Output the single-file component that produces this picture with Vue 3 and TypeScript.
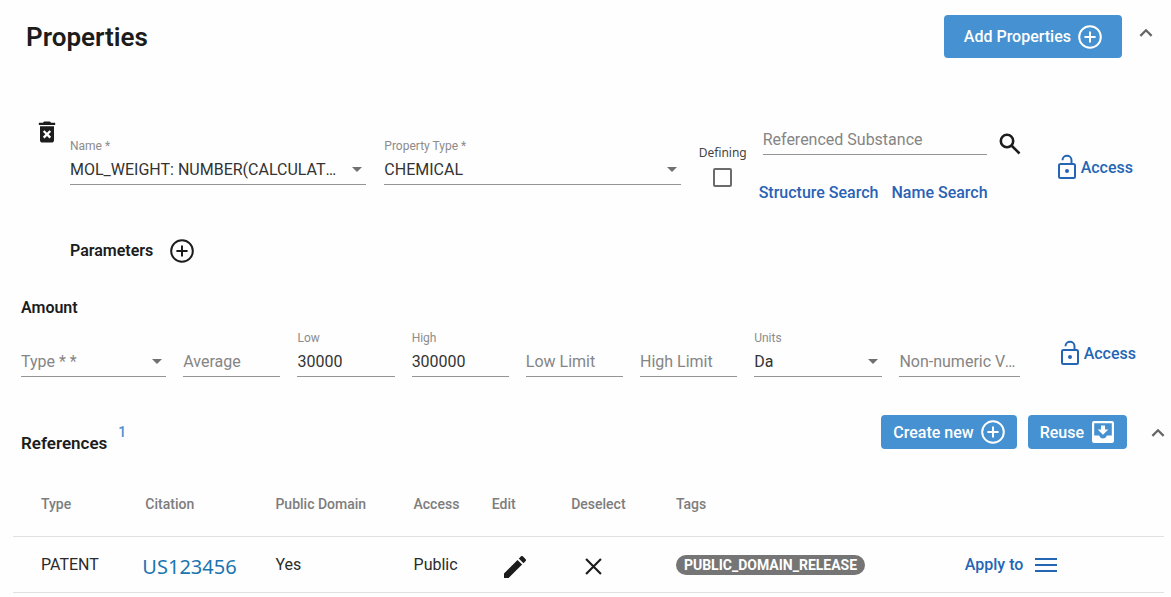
<script setup lang="ts">
import { ref } from 'vue'

interface AmountField {
  id: string
  label: string
  value: string
  floating: boolean
}

interface Reference {
  type: string
  citation: string
  publicDomain: string
  access: string
  tag: string
}

const propertyName = ref('MOL_WEIGHT: NUMBER(CALCULATED)')
const propertyType = ref('CHEMICAL')
const defining = ref(false)
const substance = ref('')
const amountType = ref('')
const units = ref('Da')
const nonNumeric = ref('')

const amountFields = ref<AmountField[]>([
  { id: 'average', label: 'Average', value: '', floating: false },
  { id: 'low', label: 'Low', value: '30000', floating: true },
  { id: 'high', label: 'High', value: '300000', floating: true },
  { id: 'low-limit', label: 'Low Limit', value: '', floating: false },
  { id: 'high-limit', label: 'High Limit', value: '', floating: false },
])

const columns: string[] = ['Type', 'Citation', 'Public Domain', 'Access', 'Edit', 'Deselect', 'Tags']

const references = ref<Reference[]>([
  { type: 'PATENT', citation: 'US123456', publicDomain: 'Yes', access: 'Public', tag: 'PUBLIC_DOMAIN_RELEASE' },
])
</script>

<template>
  <main class="page">
    <header class="page-head">
      <h1>Properties</h1>
      <button type="button" class="primary large">
        <span>Add Properties</span>
        <svg class="i-plus" viewBox="0 0 24 24"><circle cx="12" cy="12" r="10.8" /><path d="M12 6.4v11.2M6.4 12h11.2" /></svg>
      </button>
      <button type="button" class="bare chevron" aria-label="Collapse properties">
        <svg viewBox="0 0 12 8"><path d="M1 7l5-5 5 5" /></svg>
      </button>
    </header>

    <section class="property">
      <button type="button" class="bare trash" aria-label="Delete property">
        <svg viewBox="0 0 24 24"><path fill-rule="evenodd" d="M6 19c0 1.1.9 2 2 2h8c1.1 0 2-.9 2-2V7H6v12zm2.46-7.12l1.41-1.41L12 12.59l2.12-2.12 1.41 1.41L13.41 14l2.12 2.12-1.41 1.41L12 15.41l-2.12 2.12-1.41-1.41L10.59 14l-2.13-2.12zM15.5 4l-1-1h-5l-1 1H5v2h14V4z" /></svg>
      </button>

      <div class="field wide">
        <label for="name">Name *</label>
        <select id="name" v-model="propertyName">
          <option>MOL_WEIGHT: NUMBER(CALCULATED)</option>
        </select>
      </div>
      <div class="field wide">
        <label for="ptype">Property Type *</label>
        <select id="ptype" v-model="propertyType">
          <option>CHEMICAL</option>
        </select>
      </div>

      <div class="defining">
        <label for="defining">Defining</label>
        <input id="defining" v-model="defining" type="checkbox" />
      </div>

      <div class="substance">
        <div class="search">
          <div class="field">
            <input v-model="substance" type="text" placeholder="Referenced Substance" aria-label="Referenced Substance" />
          </div>
          <button type="button" class="bare" aria-label="Search">
            <svg viewBox="0 0 22 22"><circle cx="8" cy="8" r="6.2" /><path d="M12.5 12.5L20.5 20.5" /></svg>
          </button>
        </div>
        <nav class="links">
          <a href="#structure">Structure Search</a>
          <a href="#name-search">Name Search</a>
        </nav>
      </div>

      <button type="button" class="bare access">
        <svg viewBox="0 0 20 26"><rect x="2" y="10" width="16" height="14" rx="1.5" /><path d="M5.5 6.2C5.5 0.4 14.5 0.4 14.5 6.2V10" /><circle class="dot" cx="10" cy="17" r="2" /></svg>
        <span>Access</span>
      </button>
    </section>

    <div class="parameters">
      <h2>Parameters</h2>
      <button type="button" class="bare" aria-label="Add parameter">
        <svg class="i-plus" viewBox="0 0 24 24"><circle cx="12" cy="12" r="10.8" /><path d="M12 6.4v11.2M6.4 12h11.2" /></svg>
      </button>
    </div>

    <h2 class="amount-title">Amount</h2>
    <section class="amount">
      <div class="field">
        <select v-model="amountType" class="empty" aria-label="Type">
          <option value="">Type * *</option>
        </select>
      </div>
      <div v-for="f in amountFields" :key="f.id" class="field">
        <label v-if="f.floating" :for="f.id">{{ f.label }}</label>
        <input :id="f.id" v-model="f.value" type="text" :placeholder="f.floating ? '' : f.label" :aria-label="f.label" />
      </div>
      <div class="field">
        <label for="units">Units</label>
        <select id="units" v-model="units">
          <option>Da</option>
        </select>
      </div>
      <div class="field">
        <input v-model="nonNumeric" type="text" placeholder="Non-numeric Value" aria-label="Non-numeric Value" />
      </div>
      <button type="button" class="bare access">
        <svg viewBox="0 0 20 26"><rect x="2" y="10" width="16" height="14" rx="1.5" /><path d="M5.5 6.2C5.5 0.4 14.5 0.4 14.5 6.2V10" /><circle class="dot" cx="10" cy="17" r="2" /></svg>
        <span>Access</span>
      </button>
    </section>

    <header class="ref-head">
      <h2>References</h2>
      <span class="count">{{ references.length }}</span>
      <button type="button" class="primary">
        <span>Create new</span>
        <svg class="i-plus" viewBox="0 0 24 24"><circle cx="12" cy="12" r="10.8" /><path d="M12 6.4v11.2M6.4 12h11.2" /></svg>
      </button>
      <button type="button" class="primary">
        <span>Reuse</span>
        <svg class="i-inbox" viewBox="0 0 24 24"><path fill-rule="evenodd" d="M3 1h18a2 2 0 0 1 2 2v18a2 2 0 0 1-2 2H3a2 2 0 0 1-2-2V3a2 2 0 0 1 2-2zM3.2 3.2v12.3h5c.6 2 2 3 3.8 3s3.2-1 3.8-3h5V3.2zM10 5.5h4v4h3.3L12 14.8 6.7 9.5H10z" /></svg>
      </button>
      <button type="button" class="bare chevron" aria-label="Collapse references">
        <svg viewBox="0 0 12 8"><path d="M1 7l5-5 5 5" /></svg>
      </button>
    </header>

    <table class="refs">
      <colgroup>
        <col class="c-type" />
        <col class="c-cite" />
        <col class="c-domain" />
        <col class="c-access" />
        <col class="c-edit" />
        <col class="c-deselect" />
        <col class="c-tags" />
        <col />
      </colgroup>
      <thead>
        <tr>
          <th v-for="c in columns" :key="c" scope="col">{{ c }}</th>
          <td></td>
        </tr>
      </thead>
      <tbody>
        <tr v-for="r in references" :key="r.citation">
          <td>{{ r.type }}</td>
          <td><a class="cite" href="#citation">{{ r.citation }}</a></td>
          <td>{{ r.publicDomain }}</td>
          <td>{{ r.access }}</td>
          <td>
            <button type="button" class="bare edit" aria-label="Edit">
              <svg viewBox="3 3 18 18"><path d="M3 17.25V21h3.75L17.81 9.94l-3.75-3.75L3 17.25zM20.71 7.04a1 1 0 0 0 0-1.41l-2.34-2.34a1 1 0 0 0-1.41 0l-1.83 1.83 3.75 3.75 1.83-1.83z" /></svg>
            </button>
          </td>
          <td>
            <button type="button" class="bare deselect" aria-label="Deselect">
              <svg viewBox="0 0 16 16"><path d="M1 1l14 14M15 1L1 15" /></svg>
            </button>
          </td>
          <td><span class="tag">{{ r.tag }}</span></td>
          <td>
            <button type="button" class="bare apply">
              <span>Apply to</span>
              <svg viewBox="0 0 22 16"><path d="M0 2h22M0 8h22M0 14h22" /></svg>
            </button>
          </td>
        </tr>
      </tbody>
    </table>
  </main>
</template>

<style>
body {
  margin: 0;
  background: #fefefe;
}
</style>

<style scoped>
.page {
  font-family: Roboto, "Liberation Sans", sans-serif;
  font-size: 16px;
  color: #2b2b2b;
}

h1,
h2 {
  margin: 0;
  color: #1c1c1c;
  font-weight: 600;
}

h1 {
  font-size: 26px;
  line-height: 32px;
}

h2 {
  font-size: 16px;
  line-height: 24px;
}

svg {
  display: block;
  flex: none;
  fill: none;
  stroke: currentColor;
}

button {
  font-family: inherit;
  font-size: 16px;
  cursor: pointer;
}

.bare {
  display: flex;
  align-items: center;
  padding: 0;
  border: 0;
  background: none;
  color: #1c1c1c;
}

.primary {
  display: flex;
  align-items: center;
  gap: 7px;
  height: 34px;
  padding: 0 12px;
  border: 0;
  border-radius: 4px;
  background: #4591d1;
  color: #fff;
  font-weight: 500;
}

.primary.large {
  height: 43px;
  padding: 0 20px;
}

.i-plus {
  width: 24px;
  height: 24px;
  stroke-width: 2;
}

.i-inbox {
  width: 24px;
  height: 24px;
  fill: currentColor;
  stroke: none;
}

.chevron {
  color: #666;
}

.chevron svg {
  width: 14px;
  height: 9px;
  stroke-width: 2;
}

.page-head {
  display: flex;
  align-items: center;
  gap: 17px;
  padding: 15px 18px 0 26px;
}

.page-head h1 {
  flex: 1;
}

.page-head .chevron {
  margin-bottom: 8px;
}

.property {
  display: flex;
  align-items: flex-start;
  padding: 60px 37px 0 33px;
}

.trash {
  margin-right: 9px;
}

.trash svg {
  width: 28px;
  height: 28px;
  fill: currentColor;
  stroke: none;
}

.field {
  display: flex;
  flex-direction: column;
  min-width: 0;
}

.field label {
  height: 16px;
  font-size: 12px;
  line-height: 16px;
  color: #8c8c8c;
}

.field input,
.field select {
  box-sizing: border-box;
  width: 100%;
  height: 31px;
  margin: 0;
  padding: 0;
  border: 0;
  border-bottom: 1px solid #949494;
  border-radius: 0;
  background-color: transparent;
  font-family: inherit;
  font-size: 16px;
  color: #333;
  text-overflow: ellipsis;
  outline: none;
}

.field input::placeholder {
  color: #858585;
  opacity: 1;
  text-overflow: ellipsis;
}

.field select {
  appearance: none;
  padding-right: 22px;
  background-image: url("data:image/svg+xml,%3Csvg xmlns='http://www.w3.org/2000/svg' width='10' height='5'%3E%3Cpath d='M0 0h10L5 5z' fill='%23707070'/%3E%3C/svg%3E");
  background-repeat: no-repeat;
  background-position: right 4px center;
}

.field select.empty {
  color: #858585;
}

.wide {
  flex: 1;
  margin: 20px 18px 0 0;
}

.defining {
  display: flex;
  flex-direction: column;
  align-items: center;
  gap: 7px;
  width: 48px;
  margin-top: 27px;
}

.defining label {
  font-family: "Noto Sans", sans-serif;
  font-size: 12px;
  line-height: 16px;
  color: #444;
}

.defining input {
  appearance: none;
  box-sizing: border-box;
  width: 19px;
  height: 19px;
  margin: 0;
  border: 2px solid #6b6b6b;
  border-radius: 2px;
  background: #fff;
}

.substance {
  width: 258px;
  margin: 6px 36px 0 16px;
}

.search {
  display: flex;
  align-items: flex-end;
  gap: 12px;
}

.search .field {
  flex: 1;
}

.search svg {
  width: 22px;
  height: 22px;
  stroke-width: 2.6;
}

.links {
  display: flex;
  gap: 13px;
  margin: 28px 0 0 -4px;
}

.links a {
  line-height: 20px;
  font-weight: 500;
  color: #2a62b5;
  text-decoration: none;
  white-space: nowrap;
}

.access {
  gap: 4px;
  color: #2466b4;
  font-weight: 500;
}

.access svg {
  width: 20px;
  height: 26px;
  stroke-width: 2;
}

.access .dot {
  fill: currentColor;
  stroke: none;
}

.property .access {
  margin: 36px 1px 0 0;
}

.parameters {
  display: flex;
  align-items: center;
  gap: 17px;
  padding: 36px 0 0 70px;
}

.amount-title {
  padding: 33px 0 0 21px;
}

.amount {
  display: grid;
  grid-template-columns: 145fr repeat(5, 97fr) 128fr 120fr auto;
  align-items: end;
  gap: 17px;
  padding: 10px 35px 0 21px;
}

.amount .access {
  margin: 0 0 11px 23px;
}

.ref-head {
  display: flex;
  align-items: center;
  gap: 11px;
  padding: 32px 6px 0 21px;
}

.ref-head h2 {
  margin-top: 22px;
  font-size: 17px;
}

.count {
  flex: 1;
  font-size: 14px;
  font-weight: 500;
  line-height: 20px;
  color: #4a8fd0;
}

.ref-head .chevron {
  margin-left: 13px;
}

.refs {
  width: calc(100% - 20px);
  margin: 17px 7px 0 13px;
  border-collapse: collapse;
  table-layout: fixed;
}

.refs th,
.refs td {
  padding: 0;
  border-bottom: 1px solid #e0e0e0;
  text-align: left;
  white-space: nowrap;
}

.refs th {
  height: 64px;
  font-size: 14px;
  font-weight: 500;
  color: #7d7d7d;
}

.refs tbody td {
  height: 55px;
}

.refs th:first-child,
.refs td:first-child {
  padding-left: 28px;
}

.c-type {
  width: 11.5%;
}

.c-cite {
  width: 11.3%;
}

.c-domain {
  width: 12%;
}

.c-access {
  width: 6.8%;
}

.c-edit {
  width: 6.9%;
}

.c-deselect {
  width: 9.1%;
}

.c-tags {
  width: 25.1%;
}

.cite {
  display: inline-block;
  margin-left: -3px;
  padding-top: 4px;
  font-family: "Noto Sans", sans-serif;
  font-size: 20px;
  line-height: 24px;
  color: #1b75b0;
  text-decoration: none;
}

.edit {
  margin-left: 12px;
}

.edit svg {
  width: 22px;
  height: 22px;
  fill: currentColor;
  stroke: none;
}

.deselect {
  margin-left: 14px;
}

.deselect svg {
  width: 17px;
  height: 17px;
  stroke-width: 2;
}

.edit,
.deselect {
  margin-top: 4px;
}

.tag {
  display: inline-block;
  padding: 0 8px;
  border-radius: 10px;
  background: #757575;
  color: #fff;
  font-size: 14px;
  font-weight: 700;
  line-height: 20px;
}

.apply {
  gap: 12px;
  color: #2466b4;
  font-weight: 500;
}

.apply svg {
  width: 22px;
  height: 16px;
  stroke-width: 2;
}
</style>
